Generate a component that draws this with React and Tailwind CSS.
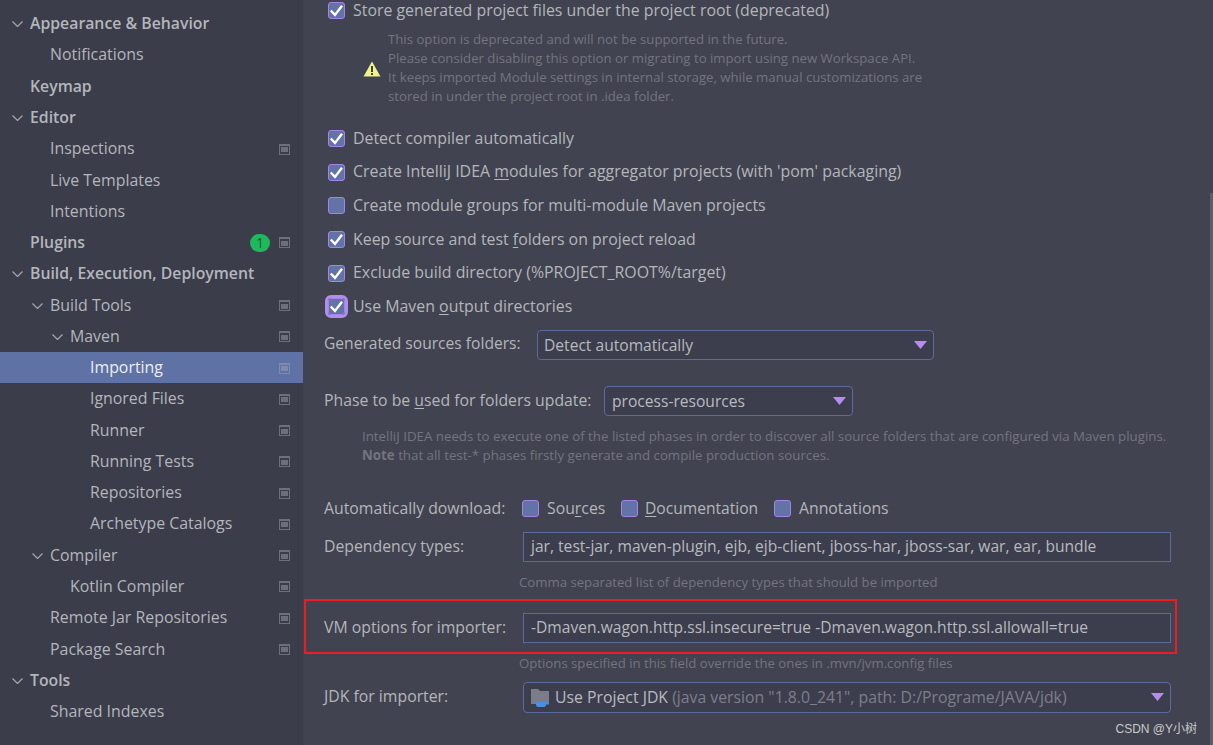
import React from "react";

const FONT = "font-['Open_Sans','Noto_Sans',sans-serif]";

// sidebar tree: depth, label, bold, chevron, gear icon
const TREE = [
  { d: 0, t: "Appearance & Behavior", b: true, open: true },
  { d: 1, t: "Notifications" },
  { d: 0, t: "Keymap", b: true },
  { d: 0, t: "Editor", b: true, open: true },
  { d: 1, t: "Inspections", g: true },
  { d: 1, t: "Live Templates" },
  { d: 1, t: "Intentions" },
  { d: 0, t: "Plugins", b: true, g: true, badge: "1" },
  { d: 0, t: "Build, Execution, Deployment", b: true, open: true },
  { d: 1, t: "Build Tools", g: true, open: true },
  { d: 2, t: "Maven", g: true, open: true },
  { d: 3, t: "Importing", g: true, sel: true },
  { d: 3, t: "Ignored Files", g: true },
  { d: 3, t: "Runner", g: true },
  { d: 3, t: "Running Tests", g: true },
  { d: 3, t: "Repositories", g: true },
  { d: 3, t: "Archetype Catalogs", g: true },
  { d: 1, t: "Compiler", g: true, open: true },
  { d: 2, t: "Kotlin Compiler", g: true },
  { d: 1, t: "Remote Jar Repositories", g: true },
  { d: 1, t: "Package Search", g: true },
  { d: 0, t: "Tools", b: true, open: true },
  { d: 1, t: "Shared Indexes" },
];

const INDENT = ["pl-[30px]", "pl-[50px]", "pl-[70px]", "pl-[90px]"];
const CHEVRON = ["left-[12px]", "left-[32px]", "left-[52px]", "left-[72px]"];

const GearBox = ({ sel }) => (
  <span className={`ml-[9px] flex h-[11px] w-[11px] items-center justify-center border-x border-b border-t-2 ${sel ? "border-[#7d89ad]" : "border-[#6d6f7c]"}`}>
    <span className={`h-[5px] w-[7px] ${sel ? "bg-[#7d89ad]" : "bg-[#6d6f7c]"}`} />
  </span>
);

const TreeRow = ({ item }) => (
  <div
    className={`relative flex h-[31.28px] items-center pr-[13px] pt-[1px] ${INDENT[item.d]} ${
      item.sel ? "bg-[#5f72a6] text-[#eceef2]" : "text-[#b4b6bb]"
    } ${item.b ? "text-[15.8px] font-semibold" : "text-[15.9px]"}`}
  >
    {item.open && (
      <svg width="11" height="6" viewBox="0 0 11 6" fill="none" className={`absolute ${CHEVRON[item.d]}`}>
        <path d="M.5.5l5 5 5-5" stroke="#a5a7ae" strokeWidth="1.2" />
      </svg>
    )}
    <span className="flex-1">{item.t}</span>
    {item.badge && (
      <span className="flex h-[18px] w-[20px] items-center justify-center rounded-full bg-[#1fb85c] text-[14px] font-normal text-[#1b5e38]">
        {item.badge}
      </span>
    )}
    {item.g && <GearBox sel={item.sel} />}
  </div>
);

const Checkbox = ({ checked, focus }) => (
  <span
    className={`flex h-[17px] w-[17px] shrink-0 items-center justify-center rounded-[3px] border border-[#a683e6] bg-[#6273a8] ${
      focus ? "outline-[3px] outline-[#b08df0]" : ""
    }`}
  >
    {checked && (
      <svg width="15" height="15" viewBox="0 0 15 15" fill="none">
        <path d="M1.8 7.5 6 12 13 2.8" stroke="#fff" strokeWidth="2.4" />
      </svg>
    )}
  </span>
);

const CheckRow = ({ checked, focus, className = "h-[33.6px]", children }) => (
  <div className={`flex items-center gap-[8px] pl-[25px] text-[15.9px] text-[#b4b6bb] ${className}`}>
    <Checkbox checked={checked} focus={focus} />
    <span>{children}</span>
  </div>
);

const Caret = () => (
  <svg width="13" height="8" viewBox="0 0 13 8" className="shrink-0">
    <path d="M0 0h13L6.5 8z" fill="#b48cf2" />
  </svg>
);

const Select = ({ className, children }) => (
  <div className={`flex items-center justify-between rounded-[4px] border border-[#5b6b9e] bg-[#3c3e4d] pl-[6px] pr-[6px] text-[#b8babf] ${className}`}>
    <span className="flex translate-y-[1px] items-center">{children}</span>
    <Caret />
  </div>
);

const Note = ({ className, children }) => (
  <div className={`text-[13.2px] leading-[19px] text-[#73757f] ${className}`}>{children}</div>
);

export default function App() {
  return (
    <div className={`flex h-[745px] w-[1213px] overflow-hidden bg-[#414350] ${FONT}`}>
      <aside className="h-full w-[303px] shrink-0 bg-[#3b3d4b] pt-[8px]">
        {TREE.map((item) => (
          <TreeRow key={item.t} item={item} />
        ))}
      </aside>

      <main className="relative min-w-0 flex-1">
        <CheckRow checked className="h-[21px]">
          Store generated project files under the project root (deprecated)
        </CheckRow>
        <div className="mt-[9px] flex items-center pl-[60px]">
          <svg width="18" height="16" viewBox="0 0 18 16" className="mr-[7px] mt-[1px] shrink-0">
            <path d="M9 0.5 17.5 15.5H0.5z" fill="#f0f28a" />
            <rect x="8" y="5" width="2" height="6" fill="#3e3f45" />
            <rect x="8" y="12" width="2" height="2" fill="#3e3f45" />
          </svg>
          <Note>
            <div>This option is deprecated and will not be supported in the future.</div>
            <div>Please consider disabling this option or migrating to import using new Workspace API.</div>
            <div>It keeps imported Module settings in internal storage, while manual customizations are</div>
            <div>stored in under the project root in .idea folder.</div>
          </Note>
        </div>

        <div className="mt-[16px]">
          <CheckRow checked>Detect compiler automatically</CheckRow>
          <CheckRow checked>
            Create IntelliJ IDEA <u className="underline-offset-2">m</u>odules for aggregator projects (with 'pom' packaging)
          </CheckRow>
          <CheckRow>
            Create module <u className="underline-offset-2">g</u>roups for multi-module Maven projects
          </CheckRow>
          <CheckRow checked>
            Keep source and test <u className="underline-offset-2">f</u>olders on project reload
          </CheckRow>
          <CheckRow checked>Exclude build directory (%PROJECT_ROOT%/target)</CheckRow>
          <CheckRow checked focus>
            Use Maven <u className="underline-offset-2">o</u>utput directories
          </CheckRow>
        </div>

        <div className="mt-[6px] flex h-[30px] items-center pl-[21px] text-[15.6px] text-[#b4b6bb]">
          <span className="w-[213px] -translate-y-[1px]">Generated sources folders:</span>
          <Select className="h-[30px] w-[397px]">Detect automatically</Select>
        </div>

        <div className="mt-[26px] flex h-[30px] items-center pl-[21px] text-[15.8px] text-[#b4b6bb]">
          <span className="w-[280px]">
            Phase to be <u className="underline-offset-2">u</u>sed for folders update:
          </span>
          <Select className="h-[30px] w-[249px] text-[15.6px]">
            <span className="ml-[1px]">process-resources</span>
          </Select>
        </div>

        <Note className="mt-[11px] pl-[59px] leading-[18px] text-[13.3px]">
          <div>IntelliJ IDEA needs to execute one of the listed phases in order to discover all source folders that are configured via Maven plugins.</div>
          <div>
            <b>Note</b> that all test-* phases firstly generate and compile production sources.
          </div>
        </Note>

        <div className="mt-[32px] flex h-[24px] items-center pl-[21px] text-[15.8px] text-[#b4b6bb]">
          <span className="w-[198px]">Automatically download:</span>
          <Checkbox />
          <span className="ml-[8px] w-[74px]">
            Sou<u className="underline-offset-2">r</u>ces
          </span>
          <Checkbox />
          <span className="ml-[7px] w-[129px] text-[15.6px]">
            <u className="underline-offset-2">D</u>ocumentation
          </span>
          <Checkbox />
          <span className="ml-[8px]">Annotations</span>
        </div>

        <div className="mt-[11px] flex h-[30px] items-center pl-[21px] text-[15.8px] text-[#b4b6bb]">
          <span className="w-[199px]">Dependency types:</span>
          <div className="flex h-[30px] w-[648px] items-center border border-[#5b6b9e] bg-[#3c3e4d] pl-[7px] text-[15.6px] text-[#b8babf]">
            jar, test-jar, maven-plugin, ejb, ejb-client, jboss-har, jboss-sar, war, ear, bundle
          </div>
        </div>
        <Note className="mt-[11px] pl-[216px]">Comma separated list of dependency types that should be imported</Note>

        <div className="ml-[1px] mt-[7px] flex h-[55px] w-[873px] items-center border-2 border-[#ed1c24] pl-[18px] pt-[4px] text-[15.8px] text-[#b4b6bb]">
          <span className="w-[199px]">VM options for importer:</span>
          <div className="flex h-[30px] w-[648px] items-center border border-[#5b6b9e] bg-[#3c3e4d] pl-[7px] text-[15.6px] text-[#b8babf]">
            -Dmaven.wagon.http.ssl.insecure=true -Dmaven.wagon.http.ssl.allowall=true
          </div>
        </div>
        <Note className="pl-[216px]">Options specified in this field override the ones in .mvn/jvm.config files</Note>

        <div className="mt-[9px] flex h-[31px] items-center pl-[21px] text-[15.8px] text-[#b4b6bb]">
          <span className="w-[199px]">JDK for importer:</span>
          <Select className="h-[31px] w-[648px]">
            <svg width="19" height="19" viewBox="0 0 19 19" className="mr-[5px] ml-[1px] shrink-0">
              <path d="M0 0h7l2 2h9v13H0z" fill="#7b7e8a" />
              <path d="M5 13h10v2.5a2.5 2.5 0 0 1-2.5 2.5h-5A2.5 2.5 0 0 1 5 15.5z" fill="#4a90e2" />
              <path d="M15 13.5h3v2h-3z" fill="#4a90e2" />
            </svg>
            Use Project JDK&nbsp;<span className="text-[#7d7f89]">(java version "1.8.0_241", path: D:/Programe/JAVA/jdk)</span>
          </Select>
        </div>

        <span className="absolute bottom-[7px] right-[16px] font-['Liberation_Sans','Noto_Sans_CJK_SC',sans-serif] text-[12px] text-[#c9c9c9]">
          CSDN @Y小树
        </span>

        {/* overlay scrollbar thumb */}
        <span className="absolute bottom-0 right-0 top-[193px] w-[3px] bg-[#5a5c68]" />
      </main>
    </div>
  );
}
